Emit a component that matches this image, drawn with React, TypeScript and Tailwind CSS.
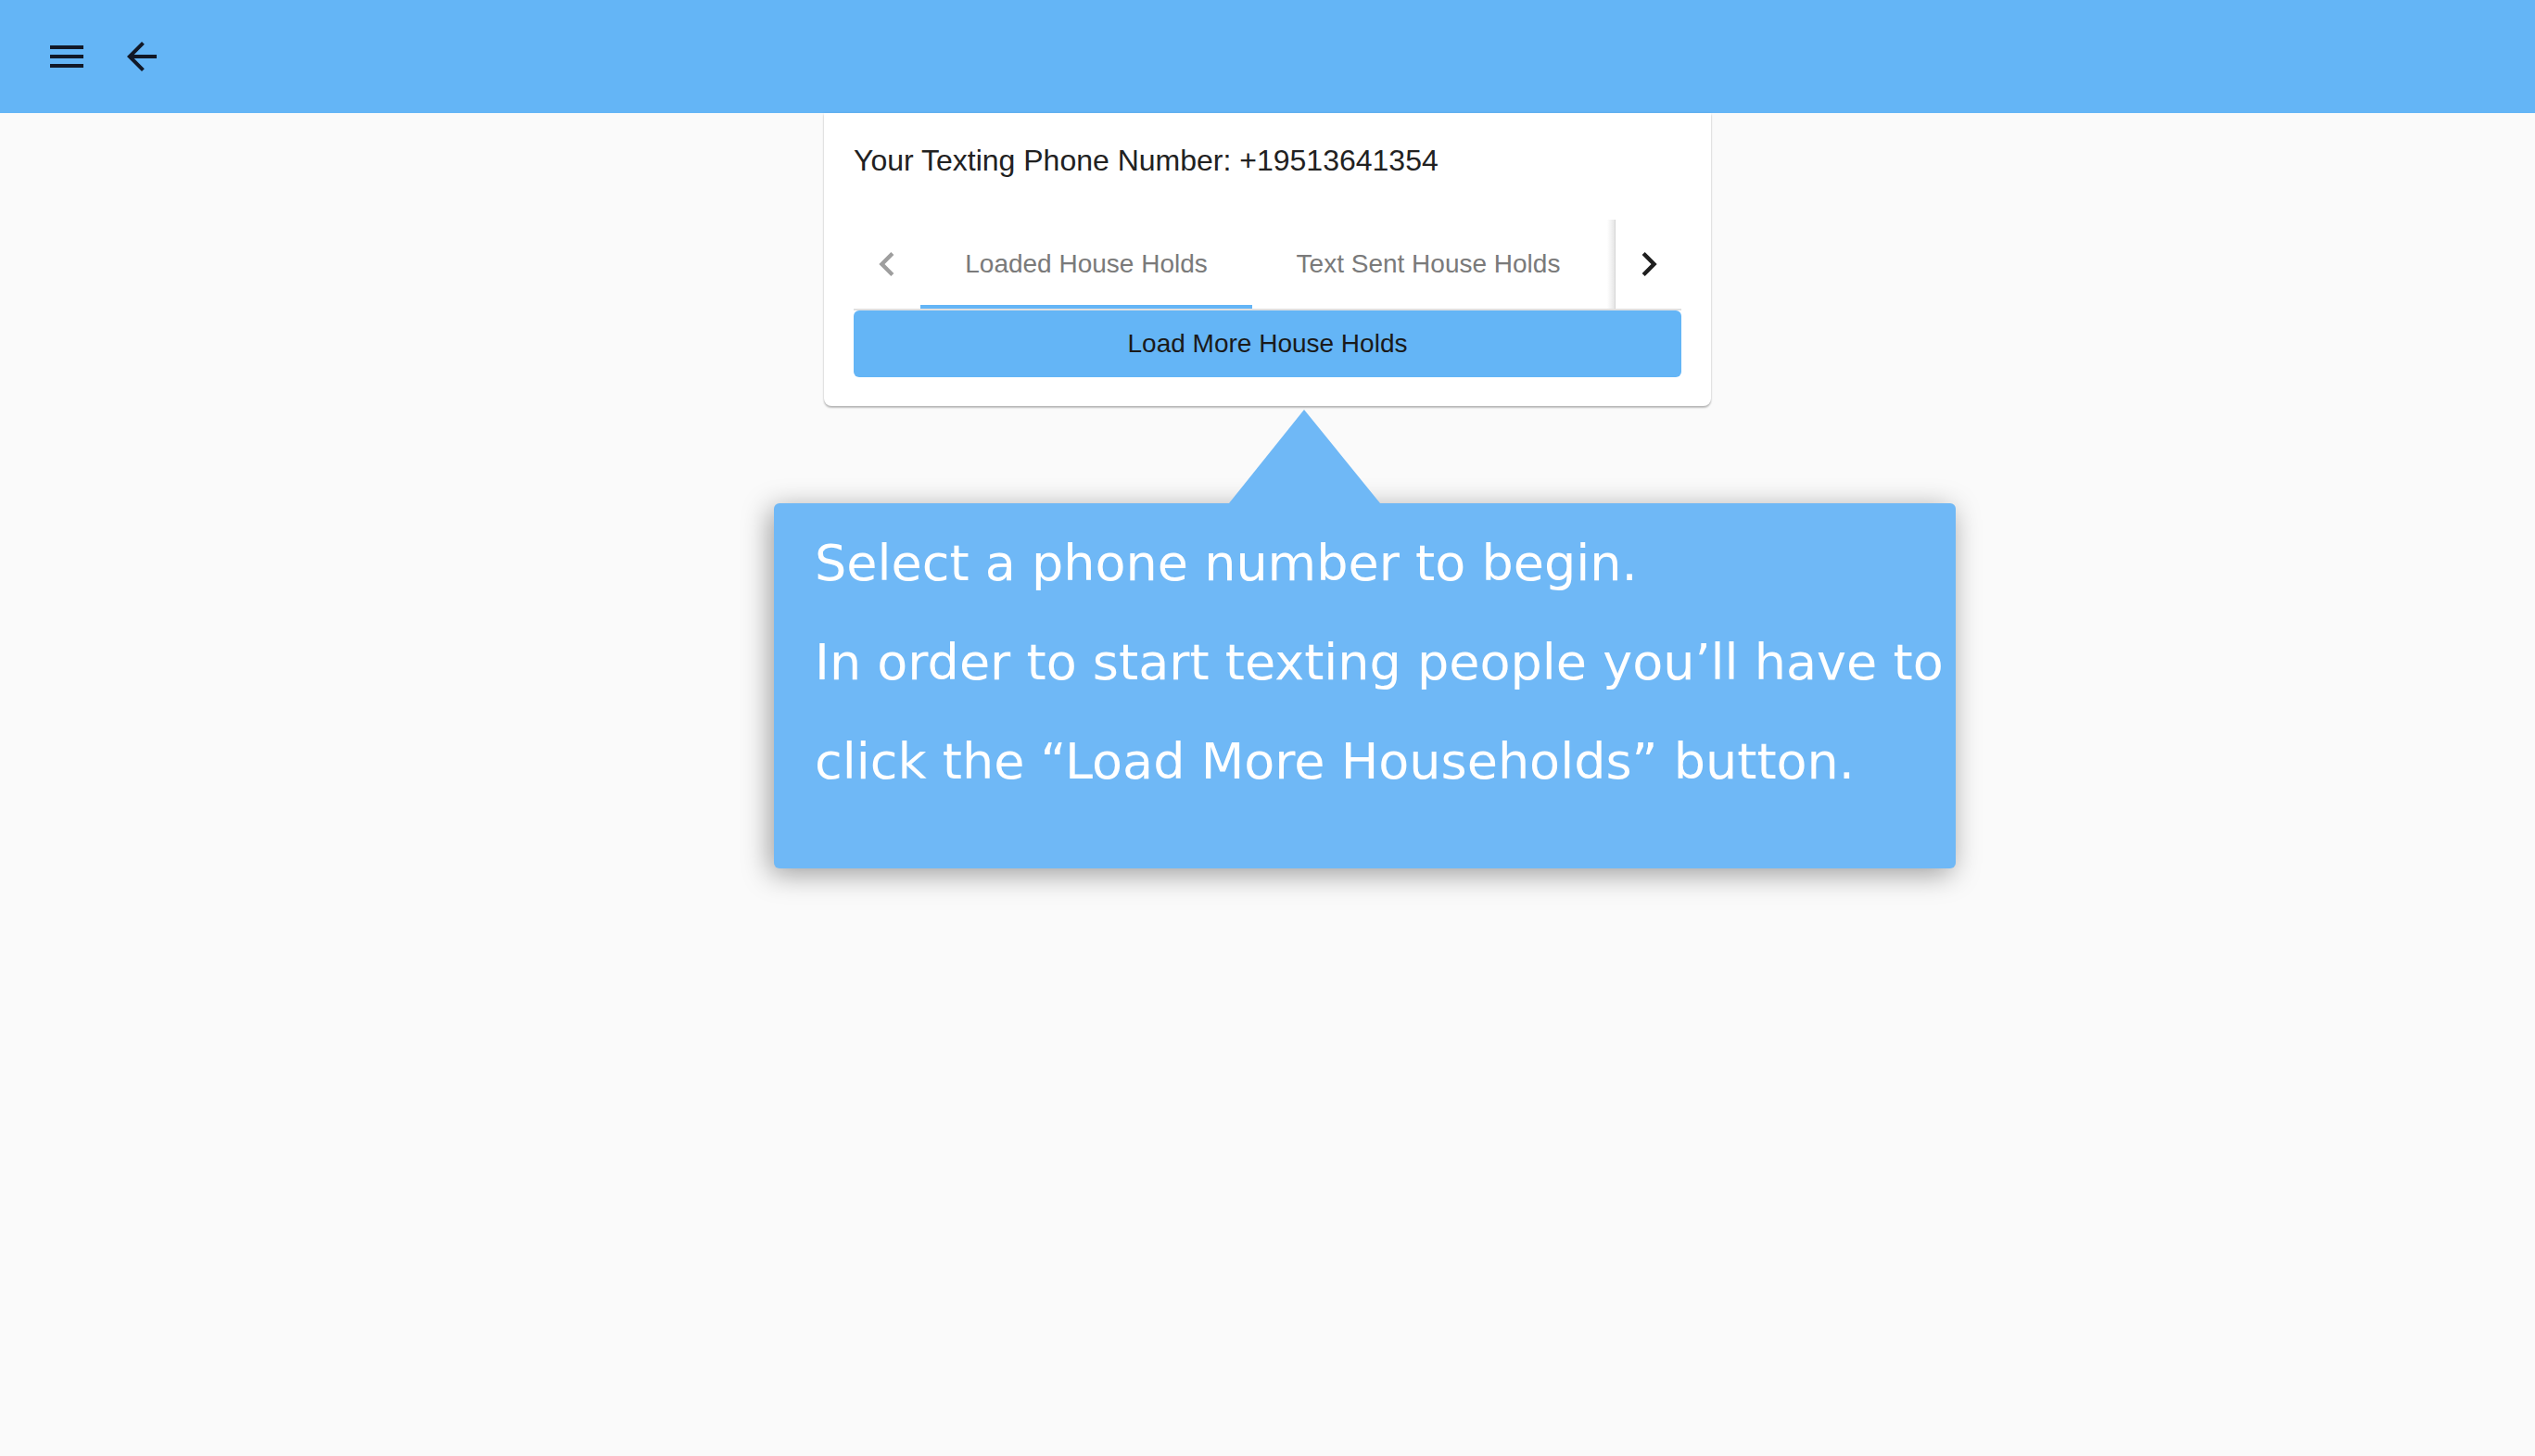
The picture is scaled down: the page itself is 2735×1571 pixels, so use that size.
import React from "react";

function MenuIcon() {
  return (
    <svg width="48" height="48" viewBox="0 0 24 24" fill="#111827">
      <path d="M3 18h18v-2H3v2zm0-5h18v-2H3v2zm0-7v2h18V6H3z" />
    </svg>
  );
}

function BackIcon() {
  return (
    <svg width="48" height="48" viewBox="0 0 24 24" fill="#111827">
      <path d="M20 11H7.83l5.59-5.59L12 4l-8 8 8 8 1.41-1.41L7.83 13H20v-2z" />
    </svg>
  );
}

function Chevron({ dir, color }: { dir: "left" | "right"; color: string }) {
  const d =
    dir === "left"
      ? "M15.41 16.59L10.83 12l4.58-4.59L14 6l-6 6 6 6 1.41-1.41z"
      : "M8.59 16.59L13.17 12 8.59 7.41 10 6l6 6-6 6-1.41-1.41z";
  return (
    <svg width="52" height="52" viewBox="0 0 24 24" fill={color}>
      <path d={d} />
    </svg>
  );
}

export default function App() {
  return (
    <div className="relative min-h-screen bg-[#fafafa] font-['Liberation_Sans',Arial,sans-serif]">
      <header className="flex h-[122px] items-center gap-[33px] bg-[#64b5f6] pl-[48px]">
        <button className="flex">
          <MenuIcon />
        </button>
        <button className="flex">
          <BackIcon />
        </button>
      </header>

      <div className="mx-auto w-[957px] rounded-b-[8px] bg-white px-[32px] pt-[35px] pb-[31px] shadow-[0_2px_2px_rgba(0,0,0,0.25),0_0_3px_rgba(0,0,0,0.08)]">
        <p className="text-[32px] leading-none text-[#212121]">
          Your Texting Phone Number: +19513641354
        </p>

        <div className="mt-[48px] flex h-[98px] border-b-2 border-[#e0e0e0]">
          <div className="flex w-[72px] items-center justify-center">
            <Chevron dir="left" color="#9e9e9e" />
          </div>
          <div className="flex flex-1 overflow-hidden">
            <div className="relative flex w-[358px] shrink-0 items-center justify-center text-[28px] text-[#7a7a7a]">
              Loaded House Holds
              <span className="absolute bottom-0 left-0 h-[4px] w-full bg-[#64b5f6]" />
            </div>
            <div className="flex w-[380px] shrink-0 items-center justify-center text-[28px] text-[#7a7a7a]">
              Text Sent House Holds
            </div>
          </div>
          <div className="relative flex w-[72px] items-center justify-center border-l border-[#d6d6d6] bg-white">
            <span className="absolute left-[-9px] top-0 h-full w-[8px] bg-gradient-to-l from-black/10 to-transparent" />
            <Chevron dir="right" color="#1f1f1f" />
          </div>
        </div>

        <button className="flex h-[72px] w-full items-center justify-center rounded-[6px] bg-[#64b5f6] text-[28px] text-[#1a1a1a]">
          Load More House Holds
        </button>
      </div>

      <div className="absolute left-[835px] top-[543px] h-[394px] w-[1275px] rounded-[6px] bg-[#6fb8f6] pl-[44px] pt-[11px] font-['DejaVu_Sans',sans-serif] text-[54px] leading-[107px] text-white shadow-[-4px_6px_30px_rgba(0,0,0,0.38)]">
        <span className="absolute left-[491px] top-[-101px] h-0 w-0 border-b-[101px] border-l-[81px] border-r-[82px] border-b-[#6fb8f6] border-l-transparent border-r-transparent" />
        <p className="whitespace-nowrap">Select a phone number to begin.</p>
        <p className="whitespace-nowrap">
          In order to start texting people you’ll have to
        </p>
        <p className="whitespace-nowrap">
          click the “Load More Households” button.
        </p>
      </div>
    </div>
  );
}
